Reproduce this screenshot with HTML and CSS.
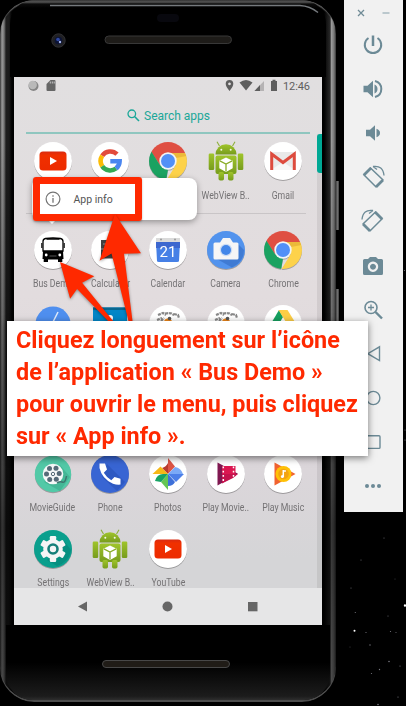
FILE: index.html
```
<!DOCTYPE html>
<html lang="fr">
<head>
<meta charset="utf-8">
<title>App info</title>
<link rel="stylesheet" href="styles.css">
</head>
<body>
<svg class="defs" width="0" height="0" aria-hidden="true">
  <defs>
    <linearGradient id="droid" x1="0" y1="0" x2="0" y2="1"><stop offset="0" stop-color="#a0c52b"/><stop offset="1" stop-color="#779c1d"/></linearGradient>
    <linearGradient id="tube" x1="0" y1="0" x2="0" y2="1"><stop offset="0" stop-color="#d92b11"/><stop offset=".2" stop-color="#f03000"/><stop offset="1" stop-color="#ed2b00"/></linearGradient>
    <clipPath id="disc"><circle cx="20" cy="20" r="19"/></clipPath>
  </defs>
  <symbol id="youtube" viewBox="0 0 40 40"><circle cx="20" cy="20" r="19" fill="#fff"/><rect x="6.500" y="10.500" width="27" height="19" rx="3.500" fill="url(#tube)"/><path d="M17 16l7 4-7 4z" fill="#fff"/></symbol>
  <symbol id="google" viewBox="0 0 40 40"><circle cx="20" cy="20" r="19" fill="#fff"/><g fill="none" stroke-width="4.600"><path d="M12.200 14.800A9.700 9.700 0 0 1 27 13.200" stroke="#e24b3c"/><path d="M12.200 14.800a9.700 9.700 0 0 0 0 10.400" stroke="#fcbc05"/><path d="M12.200 25.200a9.700 9.700 0 0 0 13.800 2.300" stroke="#35a853"/><path d="M26 27.500a9.700 9.700 0 0 0 3.600-7.200H20.300" stroke="#4a86f0"/></g></symbol>
  <symbol id="chrome" viewBox="0 0 40 40"><g clip-path="url(#disc)"><path d="M0 0h40v12H20l-8 12L0 6z" fill="#df4f42"/><path d="M3 10l9.200 14.500L20 28.500 18 40H0V8z" fill="#1ba261"/><path d="M20 12h20v28H18l9.500-15.500z" fill="#fdd24a"/><path d="M20 12h17l1.500 3L28 17z" fill="#dfa92f" opacity=".6"/></g><circle cx="20" cy="20" r="8.700" fill="#f1f4f5"/><circle cx="20" cy="20" r="7" fill="#5190f7"/></symbol>
  <symbol id="android" viewBox="0 0 40 40"><g fill="url(#droid)"><path d="M9.500 13.500a10.500 10.300 0 0 1 21 0z"/><rect x="9.500" y="14.500" width="21" height="18.500" rx="2"/><rect x="2.700" y="12.500" width="5.500" height="16.500" rx="1.200"/><rect x="31.800" y="12.500" width="5.500" height="16.500" rx="1.200"/><rect x="12.500" y="31" width="5.500" height="8.500" rx="1.700"/><rect x="22" y="31" width="5.500" height="8.500" rx="1.700"/></g><path d="M13.500 5L11 .7M26.500 5L29 .7" stroke="#8daf3a" stroke-width="1.100"/><circle cx="15.300" cy="8.700" r="1" fill="#f4f8e8"/><circle cx="24.700" cy="8.700" r="1" fill="#f4f8e8"/><path d="M20 16.500l6.700 3.200v7.600L20 31l-6.700-3.700v-7.600z" fill="#fff"/><path d="M13.800 19.900L20 23l6.200-3.100M20 23v7.500" fill="none" stroke="#8aad28" stroke-width="1.300"/></symbol>
  <symbol id="gmail" viewBox="0 0 40 40"><circle cx="20" cy="20" r="19" fill="#fff"/><path d="M8 11h24v18H8z" fill="#e9e9e9"/><path d="M20 21l12 8H8z" fill="#f7f7f7"/><path d="M8.700 29V13L20 21.500 31.300 13v16" fill="none" stroke="#dd4b3e" stroke-width="3"/></symbol>
  <symbol id="bus" viewBox="0 0 40 40"><circle cx="20" cy="20" r="19" fill="#fff"/><path d="M12.500 8.500q7.500-1 15 0 2.500.5 2.500 3v9.500H10v-9.500q0-2.500 2.500-3z" fill="#fff" stroke="#000" stroke-width="1.300"/><path d="M10 21h20l.5 8h-1.200V32H25v-2.500H15V32h-4.300v-3H9.500z"/><path d="M13.500 9h13" stroke="#000" stroke-width="1.500"/><path d="M8.800 13v5M31.200 13v5" stroke="#000" stroke-width="1.100"/><circle cx="13.200" cy="25" r="1.400" fill="#fff"/><circle cx="26.800" cy="25" r="1.400" fill="#fff"/><path d="M16.500 26h7" stroke="#555"/></symbol>
  <symbol id="calculator" viewBox="0 0 40 40"><circle cx="20" cy="20" r="19" fill="#fff"/><path d="M11 10h18v18.500H11z" fill="#424242"/><path d="M13 14h4M11 19h18M13 24h5" stroke="#999"/></symbol>
  <symbol id="camera" viewBox="0 0 40 40"><circle cx="20" cy="20" r="19" fill="#5293ed"/><path d="M31 13l7 7q0 12-12 17.500L11 29z" fill="#407bd3" clip-path="url(#disc)"/><path d="M9 12.500h5l3-4.500h7l3 4.500h4q1.500 0 1.500 1.500v14q0 1.500-1.500 1.500H9q-1.500 0-1.500-1.500V14q0-1.500 1.500-1.500z" fill="#f6f6f6"/><circle cx="20" cy="20" r="6.200" fill="#cbdcf4"/><circle cx="20" cy="20" r="5" fill="#4286e9"/></symbol>
  <symbol id="compass" viewBox="0 0 40 40"><circle cx="20" cy="20" r="17.500" fill="#4f8fef"/><path d="M25 8l-6 12-3 6" stroke="#dfeafa" stroke-width="1.600" fill="none"/></symbol>
  <symbol id="contacts" viewBox="0 0 40 40"><path d="M3 3.500h34v34H3z" fill="#0286c7"/><path d="M3 3.500h34v2.500H3z" fill="#09678f"/><circle cx="20" cy="14" r="3" fill="#fff"/></symbol>
  <symbol id="tools" viewBox="0 0 40 40"><circle cx="20" cy="20" r="19" fill="#fff"/><path d="M10 11l5-2 3 2M17 9.500q7-1.500 9 2M9 16l5-2M26 10l4 1 1 3M13 17l3-3" fill="none" stroke="#888" stroke-width="2.200" stroke-dasharray="3 .8"/><circle cx="20" cy="18.500" r="4" fill="#f08719"/><circle cx="21.500" cy="14.500" r="1.800" fill="#555"/></symbol>
  <symbol id="drive" viewBox="0 0 40 40"><circle cx="20" cy="20" r="19" fill="#fff"/><path d="M16 6l4 7L10 30l-4-7z" fill="#15a05f"/><path d="M15.500 6h9L35 23h-9z" fill="#fdce46"/><path d="M14 23h21l-4 7H10z" fill="#4688f1"/></symbol>
  <symbol id="movieguide" viewBox="0 0 40 40"><circle cx="20" cy="20" r="18.200" fill="#52c9a7"/><path d="M27 11l10 12-10 14-16-9z" fill="#44b796"/><circle cx="20" cy="20" r="10.300" fill="#f5f8f8"/><g fill="#566b78"><circle cx="16.500" cy="14.500" r="2.500"/><circle cx="23" cy="14.300" r="2.500"/><circle cx="26.200" cy="19.500" r="2.500"/><circle cx="23.300" cy="25.300" r="2.500"/><circle cx="16.700" cy="25.500" r="2.500"/><circle cx="13.500" cy="20" r="2.500"/></g><circle cx="20" cy="20" r="1.700" fill="none" stroke="#566b78"/><path d="M24 29q3-2 5-1t3-1 1.500-5" fill="none" stroke="#3e756e" stroke-width="1.500"/></symbol>
  <symbol id="phone-app" viewBox="0 0 40 40"><circle cx="20" cy="20" r="19" fill="#3865d3"/><path d="M17 10l18 18-8 9-15-14z" fill="#2e59c2"/><path d="M9.500 9.500H15l2 6-3.200 3.300q3 5 7.500 7.500l3.200-3.300 6 1.800v5.700Q27 31 23 29.700 12 25 9.500 14z" fill="#fff"/></symbol>
  <symbol id="photos" viewBox="0 0 40 40"><circle cx="20" cy="20" r="19" fill="#fff"/><path d="M20 4l7 8.500L20 20z" fill="#dd5546"/><path d="M20 20l-6-6q4-1 6-5z" fill="#b83b2f"/><path d="M4.500 20l8-7.500L20 20z" fill="#f6b817"/><path d="M20 36l-7-8 7-8z" fill="#65c653"/><path d="M7 27q2-7 8-7h5l-7 8z" fill="#17a365"/><path d="M20 20h16l-8 8z" fill="#4c7fe8"/><path d="M20 20l7-7q6 1 8 7z" fill="#7aa9f7"/><path d="M20 20l7 8q-2 4-7 4z" fill="#3e70d9"/></symbol>
  <symbol id="movies" viewBox="0 0 40 40"><circle cx="20" cy="20" r="19" fill="#fff"/><path d="M11.500 8.500L32 19.800 11.500 31.500z" fill="#801851"/><path d="M16 12h13.500v10L16 29z" fill="#db1751"/><path d="M16 20h16l-5 4-11 5.500z" fill="#c5134e"/><path d="M17.300 12.500v15M27.500 12.500v12" stroke="#fff" stroke-width="1.500" stroke-dasharray="1.800 2.400"/></symbol>
  <symbol id="music" viewBox="0 0 40 40"><circle cx="20" cy="20" r="19" fill="#fff"/><path d="M11.500 8.500L32.500 20l-21 11.500z" fill="#f16330"/><circle cx="20.500" cy="20" r="8" fill="#ffc107"/><circle cx="20.500" cy="20" r="5.300" fill="#f3a311"/><path d="M20.300 16v7M20.300 17h2.600" stroke="#fff" stroke-width="1.500"/><circle cx="19.400" cy="22.600" r="1.500" fill="#fff"/></symbol>
  <symbol id="settings" viewBox="0 0 40 40"><circle cx="20" cy="20" r="19" fill="#0a9f8d"/><path d="M31 12l7 9q-2 12-14 16l-10-6z" fill="#078f80"/><g fill="#f5f5f5"><circle cx="20" cy="20" r="9.800"/><rect x="16.800" y="7" width="6.400" height="26" rx="1.200"/><rect x="16.800" y="7" width="6.400" height="26" rx="1.200" transform="rotate(60 20 20)"/><rect x="16.800" y="7" width="6.400" height="26" rx="1.200" transform="rotate(120 20 20)"/></g><circle cx="20" cy="20" r="4.500" fill="#f5f5f5" stroke="#167f79" stroke-width="2.600"/></symbol>
</svg>

<svg class="stars" width="70" height="706" viewBox="336 0 70 706" aria-hidden="true">
  <g fill="#77777f"><circle cx="354.500" cy="630.800" r="1" fill="#fff"/><circle cx="405" cy="605.500" r="1.200" fill="#fff"/><circle cx="366" cy="632.500" r=".6"/><circle cx="355.300" cy="612.500" r=".6"/><circle cx="370" cy="645" r=".7"/><circle cx="389" cy="661.500" r=".8"/><circle cx="390.500" cy="631.500" r=".6"/><circle cx="396" cy="632.500" r=".5"/><circle cx="379.500" cy="669.500" r=".7"/><circle cx="371.500" cy="673.500" r=".6"/><circle cx="400" cy="666" r=".6"/><circle cx="398" cy="697" r=".6"/><circle cx="378" cy="704.500" r=".8"/><circle cx="350" cy="647" r=".4"/><circle cx="388" cy="616" r=".5"/><circle cx="361" cy="560" r=".5"/><circle cx="384" cy="538" r=".5"/><circle cx="395" cy="579" r=".4"/><circle cx="351" cy="588" r=".5"/><circle cx="404.500" cy="270.500" r=".6"/><circle cx="405" cy="440" r=".6"/><circle cx="405" cy="430" r=".5"/></g>
</svg>

<main class="desktop">
  <section class="phone">
    <span class="key key-power"></span>
    <span class="key key-volume"></span>
    <header class="forehead">
      <svg width="308" height="77" viewBox="14 0 308 77" aria-hidden="true">
        <path d="M50 5.500H300q10 .5 18 7" fill="none" stroke="#75797d" stroke-width="1.400"/>
        <rect x="157" y="14" width="22" height="8" rx="4" fill="#08080e"/>
        <circle cx="58.500" cy="40.500" r="6.700" fill="#202023" stroke="#303033"/><circle cx="58.500" cy="40.500" r="3.800" fill="#0c1333"/><circle cx="58" cy="39.500" r="1.800" fill="#2f49a5"/><circle cx="60" cy="42" r="1.200" fill="#a5b6ef"/>
        <rect x="105" y="36" width="126.500" height="7.500" rx="3.700" fill="#1e1c19" stroke="#383838"/>
      </svg>
    </header>
    <div class="screen">
      <div class="status">
        <svg width="308" height="18" viewBox="14 77 308 18" aria-hidden="true">
          <circle cx="33.500" cy="86" r="5" fill="#858585"/><circle cx="32.700" cy="85" r="4.200" fill="#b9b9b9"/>
          <path d="M50.500 80H54.500q1 0 1 1v9q0 1-1 1h-7q-1 0-1-1v-6z" fill="#666"/><path d="M50.300 81.500v2M52.300 81.500v2M54.200 81.500v2" stroke="#ddd" stroke-width=".8"/>
          <path fill-rule="evenodd" d="M229.500 80a3.800 3.800 0 0 1 3.800 3.800q0 2.700-3.800 7.200-3.800-4.500-3.800-7.200a3.800 3.800 0 0 1 3.800-3.800m0 2.500a1.400 1.400 0 1 0 .01 0z" fill="#5e5e5e"/>
          <path d="M239.500 82.500q6.500-5 13 0L246 90.500z" fill="#5e5e5e"/>
          <path d="M254.500 91l9.500-10v10z" fill="#b5b3b4"/><path d="M254.500 91l5.500-6v6z" fill="#5e5e5e"/>
          <path d="M271 81h1.500v-1.300h3V81h1.500v10h-6z" fill="#5e5e5e"/>
        </svg>
        <time>12:46</time>
      </div>
      <div class="search">
        <svg width="13" height="13" viewBox="0 0 13 13" aria-hidden="true"><circle cx="4.800" cy="4.800" r="3.800" fill="none" stroke="#1ba798" stroke-width="1.300"/><path d="M7.800 7.800l4.200 4.200" stroke="#1ba798" stroke-width="1.600"/></svg>
        <span>Search apps</span>
      </div>
      <div class="drawer">
        <div class="apps suggested">
          <div class="app"><svg><use href="#youtube"/></svg></div>
          <div class="app"><svg><use href="#google"/></svg></div>
          <div class="app"><svg><use href="#chrome"/></svg></div>
          <div class="app"><svg class="flat"><use href="#android"/></svg><span>WebView B..</span></div>
          <div class="app"><svg><use href="#gmail"/></svg><span>Gmail</span></div>
        </div>
        <div class="apps all">
          <div class="app"><svg><use href="#bus"/></svg><span>Bus Demo</span></div>
          <div class="app"><svg><use href="#calculator"/></svg><span>Calculator</span></div>
          <div class="app"><svg viewBox="0 0 40 40"><circle cx="20" cy="20" r="19" fill="#fff"/><path d="M8 8h24v5H8z" fill="#dadada"/><path d="M8 12h24l-1 19q0 1-2 1H11q-2 0-2-1z" fill="#4680e6"/><path d="M8 12h24v6H8z" fill="#3c67cf"/><circle cx="13" cy="9.500" r="1" fill="#9b9b9b"/><circle cx="27" cy="9.500" r="1" fill="#9b9b9b"/><text x="20" y="27" text-anchor="middle" class="date">21</text></svg><span>Calendar</span></div>
          <div class="app"><svg><use href="#camera"/></svg><span>Camera</span></div>
          <div class="app"><svg><use href="#chrome"/></svg><span>Chrome</span></div>
          <div class="app"><svg><use href="#compass"/></svg></div>
          <div class="app"><svg><use href="#contacts"/></svg></div>
          <div class="app"><svg><use href="#tools"/></svg></div>
          <div class="app"><svg><use href="#tools"/></svg></div>
          <div class="app"><svg><use href="#drive"/></svg></div>
          <div class="app"></div><div class="app"></div><div class="app"></div><div class="app"></div><div class="app"></div>
          <div class="app"><svg><use href="#movieguide"/></svg><span>MovieGuide</span></div>
          <div class="app"><svg><use href="#phone-app"/></svg><span>Phone</span></div>
          <div class="app"><svg><use href="#photos"/></svg><span>Photos</span></div>
          <div class="app"><svg><use href="#movies"/></svg><span>Play Movie..</span></div>
          <div class="app"><svg><use href="#music"/></svg><span>Play Music</span></div>
          <div class="app"><svg><use href="#settings"/></svg><span>Settings</span></div>
          <div class="app"><svg class="flat"><use href="#android"/></svg><span>WebView B..</span></div>
          <div class="app"><svg><use href="#youtube"/></svg><span>YouTube</span></div>
        </div>
        <div class="track"><div class="thumb"></div></div>
        <div class="popup">
          <svg width="16" height="16" viewBox="0 0 16 16" aria-hidden="true"><circle cx="8" cy="8" r="6.900" fill="none" stroke="#757575" stroke-width="1.200"/><path d="M8 4.300v1.500M8 7v4.700" stroke="#757575" stroke-width="1.300"/></svg>
          <span>App info</span>
        </div>
      </div>
      <nav class="navbar">
        <svg width="308" height="37" viewBox="14 588 308 37" fill="#666" aria-hidden="true"><path d="M87 601.500v10l-9-5z"/><circle cx="167.500" cy="606.500" r="5"/><path d="M248 602h9.500v9.300H248z"/></svg>
      </nav>
    </div>
    <footer class="chin"><span class="speaker"></span></footer>
  </section>

  <aside class="toolbar">
    <div class="window-buttons">
      <svg width="59" height="23" viewBox="344 0 59 23" stroke="#6f8b96" fill="none"><path d="M358 10l6 6M364 10l-6 6" stroke-width="1.300"/><path d="M382.500 13h7" stroke="#a9bac1" stroke-width="1.500"/></svg>
    </div>
    <div class="tool"><svg viewBox="0 0 24 24"><path d="M12 2.500v10.500" stroke-width="2.500"/><path d="M7.500 5a8.200 8.200 0 1 0 9 0" stroke-width="2"/></svg></div>
    <div class="tool"><svg viewBox="0 0 24 24"><path class="solid" d="M2.500 8.800h4L12 3.700v16.600l-5.500-5h-4z"/><path class="solid" d="M13.500 7.500q3 1.200 3 4.500t-3 4.500z"/><path d="M14 4q6.300 1.700 6.300 8T14 20" stroke-width="2"/></svg></div>
    <div class="tool"><svg viewBox="0 0 24 24"><path class="solid" d="M5 8.800h4L14 4.200v15.600l-5-4.500H5z"/><path class="solid" d="M15.500 7.800q3.500 1.200 3.500 4.200t-3.500 4.200z"/></svg></div>
    <div class="tool"><svg viewBox="0 0 24 24"><path d="M9.500 3L2.800 9.800l12 12 7-7z" stroke-width="1.500"/><path d="M10 3L3 10M22 15l-7 7" stroke-width="2.700"/><path d="M12 1.500q10-1.500 11 9M12 1.500l4 3" stroke-width="1.300"/></svg></div>
    <div class="tool"><svg viewBox="0 0 24 24" class="mirror"><path d="M9.500 3L2.800 9.800l12 12 7-7z" stroke-width="1.500"/><path d="M10 3L3 10M22 15l-7 7" stroke-width="2.700"/><path d="M12 1.500q10-1.500 11 9M12 1.500l4 3" stroke-width="1.300"/></svg></div>
    <div class="tool"><svg viewBox="0 0 24 24"><path class="solid" fill-rule="evenodd" d="M9 3h6l2 2h3.500Q22 5 22 6.500v13q0 1.500-1.500 1.500h-17Q2 21 2 19.500v-13Q2 5 3.500 5H7zM12 7.500a5.200 5.200 0 1 0 .01 0zM12 9.800a3 3 0 1 1-.01 0z"/></svg></div>
    <div class="tool"><svg viewBox="0 0 24 24"><circle cx="10" cy="9.500" r="6" stroke-width="1.600"/><path d="M7 9.500h6M10 6.500v6" stroke-width="1.300"/><path d="M14.500 14l6.500 6.500" stroke-width="2.400"/></svg></div>
    <div class="tool"><svg viewBox="0 0 24 24"><path d="M18.500 4.800v13.800L6.800 11.700z" stroke-width="1.400"/></svg></div>
    <div class="tool"><svg viewBox="0 0 24 24"><circle cx="12.300" cy="12" r="6.600" stroke-width="1.400"/></svg></div>
    <div class="tool"><svg viewBox="0 0 24 24"><rect x="5.500" y="5.700" width="13.500" height="12.700" rx="1" stroke-width="1.400"/></svg></div>
    <div class="tool"><svg viewBox="0 0 24 24"><g class="solid"><circle cx="6" cy="12" r="2"/><circle cx="12" cy="12" r="2"/><circle cx="18" cy="12" r="2"/></g></svg></div>
  </aside>

  <div class="highlight"></div>
  <svg class="arrows" width="406" height="330" viewBox="0 0 406 330" aria-hidden="true"><g fill="#ff2900"><path d="M115 214l26 39.300-17 .5 8.500 67.200h-4l-17-67.500-12 7.200z"/><path d="M60 262l34.300 14.300-12.200 6.500 31 38.200h-5l-31-32-7 9.700z"/></g></svg>
  <p class="note">
    <span>Cliquez longuement sur l’icône</span>
    <span>de l’application « Bus Demo »</span>
    <span>pour ouvrir le menu, puis cliquez</span>
    <span>sur « App info ».</span>
  </p>
</main>
</body>
</html>
```
FILE: styles.css
```
* { box-sizing: border-box; }
body {
  margin: 0;
  width: 406px;
  height: 706px;
  overflow: hidden;
  background: #000;
  font-family: Roboto, "Liberation Sans", sans-serif;
}
.defs { position: absolute; }
.stars { position: absolute; left: 336px; top: 0; }
.desktop { position: relative; display: flex; align-items: flex-start; height: 706px; }

.phone {
  position: relative;
  flex: none;
  width: 336px;
  height: 702px;
  margin-right: 8px;
  padding: 0 14px;
  border-radius: 34px;
  background:
    linear-gradient(rgba(0,0,0,0) 0, rgba(0,0,0,0) 20%, rgba(0,0,0,.65) 75%, rgba(0,0,0,.5) 100%),
    linear-gradient(90deg, #333 0, #999 2px, #777 4px, #1d1d1d 6px, #1b1b1b 9px, #000 12px, #000 324px, #1c1c1c 328px, #272727 330px, #999 331.500px, #777 334px, #333 336px);
  box-shadow: inset 0 3px 1px -1px #555, inset 0 -2px 0 #4d4d4d;
}
.forehead { height: 77px; margin: 0 -4px; padding: 0 4px; background: linear-gradient(#333 0, #555 2px, #0b0b0b 4px, #000 8px); border-radius: 24px 24px 0 0; }
.forehead svg, .status svg, .navbar svg, .window-buttons svg { display: block; }
.key { position: absolute; left: 336px; width: 3px; background: linear-gradient(90deg, #444, #777 60%, #333); }
.key-power { top: 181px; height: 49px; }
.key-volume { top: 289px; height: 96px; }

.screen { height: 548px; background: linear-gradient(#e1dfe0 0, #e2dcde 40%, #dbd6da 72%, #d5d5d7 88%); }
.status { display: flex; height: 18px; color: #5e5e5e; }
.status svg { flex: none; }
.status time { flex: none; width: 40px; margin-left: -39px; font-size: 11px; line-height: 19px; letter-spacing: -.1px; }
.search {
  display: flex;
  align-items: center;
  height: 39px;
  margin: 0 12px;
  padding: 4px 0 0 101px;
  gap: 4px;
  border-bottom: 2px solid #9cc9c4;
  border-bottom-color: #8fc6bf;
  color: #1ba798;
  font-size: 12px;
}
.drawer { position: relative; height: 454px; }
.apps { display: grid; grid-template-columns: repeat(5, 57.600px); padding-left: 10px; }
.suggested { height: 80px; padding-top: 7px; margin-right: 16px; position: relative; }
.suggested::after { content: ""; position: absolute; left: 12px; right: 0; bottom: 0; height: 1px; background: #c9c5c7; }
.all { padding-top: 15.500px; grid-auto-rows: 74.800px; }
.app { display: flex; flex-direction: column; align-items: center; color: #747274; }
.app svg { width: 40px; height: 40px; flex: none; filter: drop-shadow(0 1px .7px rgba(0,0,0,.28)); }
.app svg.flat { filter: none; }
.app span { margin-top: 8.500px; font-size: 10px; line-height: 12px; white-space: nowrap; transform: scaleX(.87); }
.date { fill: #fff; font-size: 15px; font-family: Roboto, sans-serif; }
.track { position: absolute; right: 0; top: 0; width: 5.500px; height: 454px; background: rgba(0,0,0,.07); }
.thumb { height: 39px; border-radius: 3px 0 0 3px; background: #00a894; }
.popup {
  position: absolute;
  left: 18px;
  top: 44px;
  width: 164.500px;
  height: 42px;
  display: flex;
  align-items: center;
  gap: 13px;
  padding-left: 12.500px;
  border-radius: 8px;
  background: #fff;
  box-shadow: 0 2px 6px rgba(0,0,0,.35);
  color: #555;
  font-size: 10.500px;
}
.popup::after { content: ""; position: absolute; left: 16px; top: 42px; border: 4px solid transparent; border-top-color: #fff; }
.navbar { height: 37px; background: #e6e6e7; }
.chin {
  display: flex;
  justify-content: center;
  height: 75px;
  margin: 0 -8px;
  padding: 35px 4px 0 0;
  border-radius: 0 0 26px 26px;
  background: linear-gradient(#000 50%, #1c1c1c 95%, #2d2d2d);
}
.speaker { width: 128px; height: 8px; border: 1px solid #484848; border-radius: 4px; background: #201c17; }

.toolbar { flex: none; width: 59px; height: 512px; background: #f1f1f1; }
.tool { display: flex; align-items: center; justify-content: center; height: 44.100px; padding-right: 1px; }
.tool svg { width: 24px; height: 24px; fill: none; stroke: #6c8a96; overflow: visible; }
.tool .solid { fill: #6c8a96; stroke: none; }
.tool .mirror { transform: scaleX(-1); }

.highlight { position: absolute; left: 33px; top: 177px; width: 109px; height: 44px; border: 6px solid #ff2900; border-width: 7px; border-radius: 3px; box-shadow: 0 1px 2px rgba(0,0,0,.3); }
.arrows { position: absolute; left: 0; top: 0; filter: drop-shadow(0 1px 1.500px rgba(0,0,0,.4)); }
.note {
  position: absolute;
  left: 7px;
  top: 321px;
  width: 361px;
  height: 135px;
  margin: 0;
  padding: 3px 9px;
  background: #fff;
  box-shadow: 0 2px 7px rgba(0,0,0,.5);
  color: #ff2900;
  font-weight: 700;
  font-size: 24px;
  line-height: 32px;
}
.note span { display: block; white-space: nowrap; transform: scaleX(.974); transform-origin: 0 0; }
```
